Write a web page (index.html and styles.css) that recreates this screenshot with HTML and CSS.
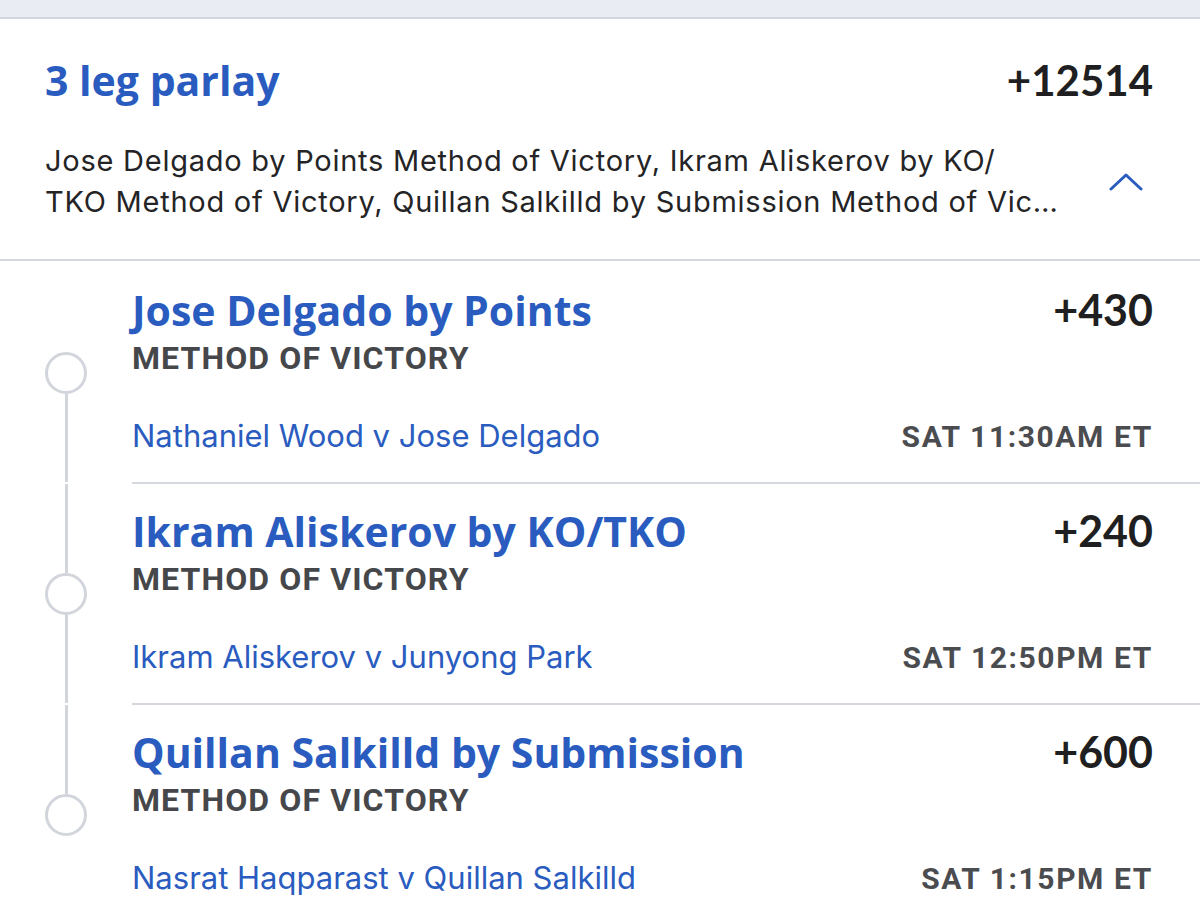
FILE: index.html
```html
<!DOCTYPE html>
<html lang="en">
<head>
<meta charset="utf-8">
<title>3 leg parlay</title>
<link rel="stylesheet" href="styles.css">
</head>
<body>
<div class="topbar"></div>
<section class="parlay">
  <header class="parlay-head">
    <div class="head-row">
      <h1 class="parlay-title">3 leg parlay</h1>
      <span class="parlay-odds">+12514</span>
    </div>
    <div class="desc-row">
      <p class="parlay-desc">Jose Delgado by Points Method of Victory, Ikram Aliskerov by KO/<br>TKO Method of Victory, Quillan Salkilld by Submission Method of Vic…</p>
      <svg class="chevron" width="34" height="20" viewBox="0 0 34 20" aria-hidden="true">
        <polyline points="2,17 17,3 32,17" fill="none" stroke="#2a5cbf" stroke-width="3" stroke-linecap="round" stroke-linejoin="round"/>
      </svg>
    </div>
  </header>
  <div class="legs">
    <div class="leg leg-first">
      <div class="rail"><span class="seg seg-top"></span><span class="dot"></span><span class="seg seg-bottom"></span></div>
      <div class="leg-body">
        <div class="row">
          <span class="leg-title">Jose Delgado by Points</span>
          <span class="leg-odds">+430</span>
        </div>
        <div class="market">METHOD OF VICTORY</div>
        <div class="row match-row">
          <span class="matchup">Nathaniel Wood v Jose Delgado</span>
          <span class="time">SAT 11:30AM ET</span>
        </div>
      </div>
    </div>
    <div class="leg">
      <div class="rail"><span class="seg seg-top"></span><span class="dot"></span><span class="seg seg-bottom"></span></div>
      <div class="leg-body">
        <div class="row">
          <span class="leg-title">Ikram Aliskerov by KO/TKO</span>
          <span class="leg-odds">+240</span>
        </div>
        <div class="market">METHOD OF VICTORY</div>
        <div class="row match-row">
          <span class="matchup">Ikram Aliskerov v Junyong Park</span>
          <span class="time">SAT 12:50PM ET</span>
        </div>
      </div>
    </div>
    <div class="leg leg-last">
      <div class="rail"><span class="seg seg-top"></span><span class="dot"></span><span class="seg seg-bottom"></span></div>
      <div class="leg-body">
        <div class="row">
          <span class="leg-title">Quillan Salkilld by Submission</span>
          <span class="leg-odds">+600</span>
        </div>
        <div class="market">METHOD OF VICTORY</div>
        <div class="row match-row">
          <span class="matchup">Nasrat Haqparast v Quillan Salkilld</span>
          <span class="time">SAT 1:15PM ET</span>
        </div>
      </div>
    </div>
  </div>
</section>
</body>
</html>
```
FILE: styles.css
```css
* { box-sizing: border-box; }
html, body { margin: 0; padding: 0; background: #ffffff; }
body {
  font-family: "Lato", "Liberation Sans", sans-serif;
  color: #1f1f21;
  overflow: hidden;
  height: 922px;
}
.topbar {
  height: 19px;
  background: #e9ecf3;
  border-bottom: 2px solid #d3d6dc;
}
.parlay-head {
  height: 242px;
  padding: 0 47px 0 45px;
  border-bottom: 2px solid #d5d8de;
}
.head-row {
  display: flex;
  justify-content: space-between;
  align-items: baseline;
  padding-top: 36px;
}
.parlay-title {
  margin: 0;
  font-family: "Open Sans", "Lato", sans-serif;
  font-size: 41px;
  line-height: 50px;
  font-weight: 700;
  color: #2a5cbf;
}
.parlay-odds {
  font-size: 42px;
  line-height: 50px;
  font-weight: 700;
  color: #1f1f21;
}
.desc-row {
  display: flex;
  align-items: center;
  justify-content: space-between;
  margin-top: 35px;
}
.parlay-desc {
  margin: 0;
  flex: 1;
  font-family: "Inter", "Lato", sans-serif;
  font-size: 29px;
  line-height: 41px;
  letter-spacing: 0.75px;
  white-space: nowrap;
  color: #242426;
}
.chevron { flex: none; margin-right: 10px; margin-top: 2px; }
.legs { display: flex; flex-direction: column; }
.leg { display: flex; height: 221px; }
.rail {
  width: 132px;
  flex: none;
  display: flex;
  flex-direction: column;
  align-items: center;
  padding-top: 2px;
}
.seg { flex: 1; width: 3px; background: #d2d5db; }
.leg-first .seg-top, .leg-last .seg-bottom { background: transparent; }
.dot {
  width: 42px;
  height: 42px;
  border-radius: 50%;
  border: 3px solid #d2d5db;
  background: #fff;
  flex: none;
}
.leg-body {
  flex: 1;
  padding-right: 47px;
  padding-top: 24px;
}
.leg + .leg .leg-body { border-top: 2px solid #d5d8de; padding-top: 22px; }
.row {
  display: flex;
  justify-content: space-between;
  align-items: baseline;
}
.leg-title {
  font-family: "Open Sans", "Lato", sans-serif;
  font-size: 41px;
  line-height: 50px;
  font-weight: 700;
  color: #2a5cbf;
}
.leg-odds {
  font-size: 43px;
  line-height: 50px;
  font-weight: 700;
  color: #1f1f21;
}
.market {
  font-family: "Roboto", "Liberation Sans", sans-serif;
  font-size: 32px;
  line-height: 40px;
  font-weight: 700;
  letter-spacing: 1.1px;
  color: #45474b;
  margin-top: 3px;
}
.match-row { margin-top: 38px; }
.matchup {
  font-family: "Inter", "Lato", sans-serif;
  font-size: 31px;
  line-height: 40px;
  color: #2a5cbf;
}
.time {
  font-family: "Roboto", "Liberation Sans", sans-serif;
  font-size: 30px;
  line-height: 40px;
  font-weight: 700;
  letter-spacing: 1.6px;
  color: #4a4c50;
}
```
